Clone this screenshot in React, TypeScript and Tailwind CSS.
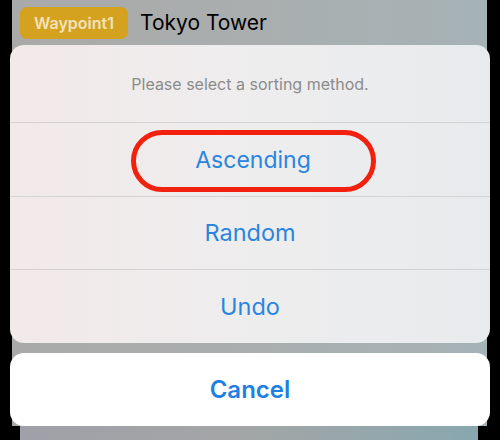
export default function App() {
  const font = { fontFamily: 'Inter, "Noto Sans", sans-serif' };

  return (
    <div className="relative h-[440px] w-[500px] overflow-hidden bg-black" style={font}>
      {/* blurred screen behind the sheet */}
      <div className="absolute top-0 bottom-[14px] left-[12px] right-[13px] bg-linear-to-r from-[#a9a9a9] via-[#aaaeae] to-[#a5b2b6]" />
      <div className="absolute bottom-0 left-[20px] right-[22px] h-[14px] bg-linear-to-r from-[#a0a0a8] via-[#a3a6a6] to-[#87a7b0]" />

      <div className="relative flex flex-col px-[10px]">
        <div className="flex h-[45px] items-center gap-[12px] pl-[10px]">
          <span className="flex h-[32px] w-[108px] items-center justify-center rounded-[7px] bg-[#d4a21e] text-[16px] font-semibold text-[#f1e2bb]">
            Waypoint1
          </span>
          <span className="text-[21px] text-black">Tokyo Tower</span>
        </div>

        <div className="flex h-[298px] flex-col overflow-hidden rounded-[14px] bg-linear-to-r from-[#f2e9e9] via-[#eeedee] to-[#e8ebed]">
          <div className="flex h-[78px] items-center justify-center border-b border-[#d3d3d3] text-[16px] text-[#8b8b8b]">
            Please select a sorting method.
          </div>
          <div className="flex h-[74px] items-center justify-center border-b border-[#d3d3d3]">
            <span className="ml-[6px] mt-[2px] flex h-[62px] w-[245px] items-center justify-center rounded-full border-[5px] border-[#f2200e] text-[23px] text-[#2a85e0]">
              Ascending
            </span>
          </div>
          <div className="flex h-[73px] items-center justify-center border-b border-[#d3d3d3] text-[23.5px] text-[#2a85e0]">
            Random
          </div>
          <div className="flex flex-1 items-center justify-center text-[23.5px] text-[#2a85e0]">
            Undo
          </div>
        </div>

        <div className="mt-[10px] flex h-[73px] items-center justify-center rounded-[14px] bg-white text-[24px] font-semibold text-[#1f80e3]">
          Cancel
        </div>
      </div>
    </div>
  );
}
